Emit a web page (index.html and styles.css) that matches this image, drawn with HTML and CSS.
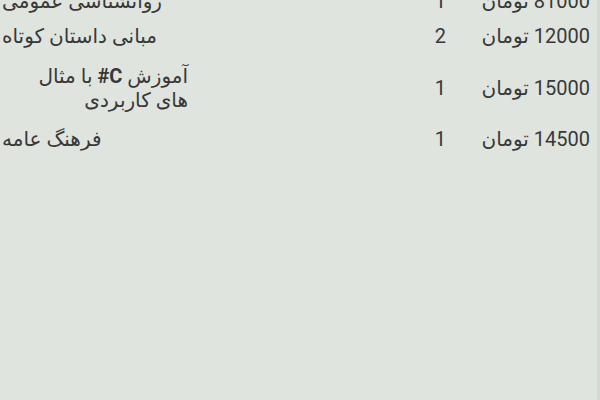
FILE: index.html
```html
<!DOCTYPE html>
<html lang="fa">
<head>
<meta charset="utf-8">
<title>سبد خرید</title>
<link rel="stylesheet" href="styles.css">
</head>
<body>
<div class="screen">
  <div class="list">
    <div class="row">
      <div class="title"><span class="title-text">روانشناسی عمومی</span></div>
      <div class="qty">1</div>
      <div class="price">81000 تومان</div>
    </div>
    <div class="row">
      <div class="title"><span class="title-text">مبانی داستان کوتاه</span></div>
      <div class="qty">2</div>
      <div class="price">12000 تومان</div>
    </div>
    <div class="row row-tall">
      <div class="title"><span class="title-text">آموزش <bdi class="latin" dir="ltr">#C</bdi> با مثال های کاربردی</span></div>
      <div class="qty">1</div>
      <div class="price">15000 تومان</div>
    </div>
    <div class="row">
      <div class="title"><span class="title-text">فرهنگ عامه</span></div>
      <div class="qty">1</div>
      <div class="price">14500 تومان</div>
    </div>
  </div>
</div>
</body>
</html>
```

FILE: styles.css
```css
html, body {
  margin: 0;
  padding: 0;
  height: 100%;
}

body {
  background: #dfe4df;
  font-family: Roboto, "DejaVu Sans", sans-serif;
  font-size: 20px;
  color: #383838;
  overflow: hidden;
}

.screen {
  height: 400px;
  border-right: 3px solid #d8d8d2;
  overflow: hidden;
}

.list {
  margin-top: -16px;
  padding-left: 2px;
  padding-right: 7px;
}

.row {
  display: grid;
  grid-template-columns: 186px 1fr 144px;
  align-items: center;
  padding: 6px 0;
  line-height: 23px;
}

.row-tall {
  padding: 10px 0;
  line-height: 24px;
}

.title {
  direction: ltr;
}

.title-text {
  display: inline-block;
  width: fit-content;
  max-width: 100%;
  direction: rtl;
  text-align: right;
}

.latin {
  font-weight: 700;
}

.qty {
  text-align: right;
}

.price {
  direction: rtl;
  text-align: right;
}
```
